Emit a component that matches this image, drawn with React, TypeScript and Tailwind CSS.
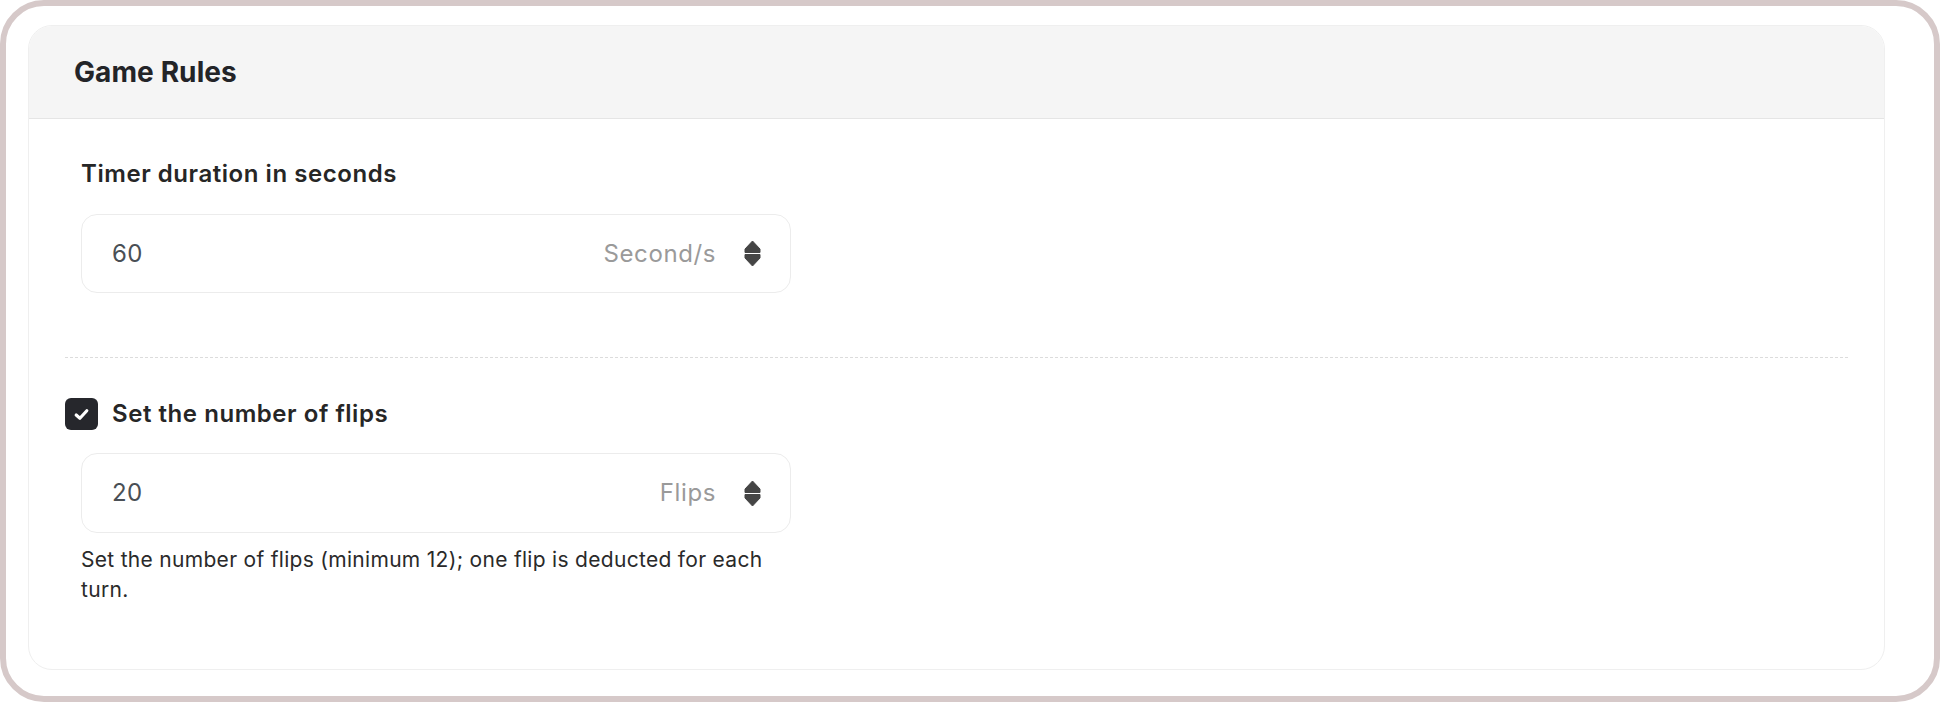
import React, { useState } from 'react';

function SpinnerIcon() {
  return (
    <svg width="17" height="27" viewBox="0 0 17 27" className="text-[#454545] shrink-0">
      <path d="M8.5 1 L16 9 L16 12.5 L1 12.5 L1 9 Z" fill="currentColor" stroke="currentColor" strokeWidth="1" strokeLinejoin="round" />
      <path d="M1 14.5 L16 14.5 L16 18 L8.5 26 L1 18 Z" fill="currentColor" stroke="currentColor" strokeWidth="1" strokeLinejoin="round" />
    </svg>
  );
}

function NumberField({ value, unit }: { value: string; unit: string }) {
  return (
    <div className="flex items-center h-[79px] w-[710px] rounded-2xl border border-[#ececec] bg-white pl-[30px] pr-[29px]">
      <span className="flex-1 text-[24px] tracking-[0.4px] text-[#4a4f55]">{value}</span>
      <span className="text-[24px] tracking-[0.6px] text-[#9a9a9a] mr-[28px]">{unit}</span>
      <SpinnerIcon />
    </div>
  );
}

export default function App() {
  const [limitFlips, setLimitFlips] = useState(true);

  return (
    <div className="w-[1940px] h-[702px] bg-white font-['Inter',sans-serif]">
      <div className="flex h-full rounded-[44px] border-[6px] border-[#d6c9c9] pl-[22px] pt-[19px] pr-[49px] pb-[26px]">
        <div className="flex-1 flex flex-col rounded-3xl border border-[#efefef] overflow-hidden">
          {/* Header */}
          <div className="h-[93px] shrink-0 flex items-center bg-[#f5f5f5] border-b border-[#e5e5e5] px-[45px]">
            <h1 className="text-[28px] font-bold tracking-[0.1px] text-[#232428]">Game Rules</h1>
          </div>

          <div className="flex-1 px-9 pt-[39px]">
            {/* Timer */}
            <div className="pl-4">
              <label className="block text-2xl leading-8 font-semibold tracking-[0.55px] text-[#262626]">Timer duration in seconds</label>
              <div className="mt-6">
                <NumberField value="60" unit="Second/s" />
              </div>
            </div>

            <div className="mt-16 border-t border-dashed border-[#dcdcdc]" />

            {/* Flips */}
            <div className="mt-10">
              <button
                type="button"
                onClick={() => setLimitFlips(!limitFlips)}
                className="flex items-center gap-[14px]"
              >
                <span className={`w-[33px] h-[32px] rounded-md flex items-center justify-center ${limitFlips ? 'bg-[#26272c]' : 'border border-gray-300 bg-white'}`}>
                  {limitFlips && (
                    <svg width="17" height="17" viewBox="0 0 16 16">
                      <path d="M3 8.5 L6.5 11.5 L13 4.5" fill="none" stroke="white" strokeWidth="3" strokeLinecap="round" strokeLinejoin="round" />
                    </svg>
                  )}
                </span>
                <span className="text-2xl leading-8 font-semibold tracking-[0.55px] text-[#262626]">Set the number of flips</span>
              </button>
              <div className="pl-4 mt-[23px]">
                <div className="h-[80px] [&>div]:h-[80px]">
                  <NumberField value="20" unit="Flips" />
                </div>
                <p className="mt-[12px] w-[710px] text-[21px] leading-[30px] tracking-[0.3px] text-[#2a2a2a]">
                  Set the number of flips (minimum 12); one flip is deducted for each turn.
                </p>
              </div>
            </div>
          </div>
        </div>
      </div>
    </div>
  );
}
